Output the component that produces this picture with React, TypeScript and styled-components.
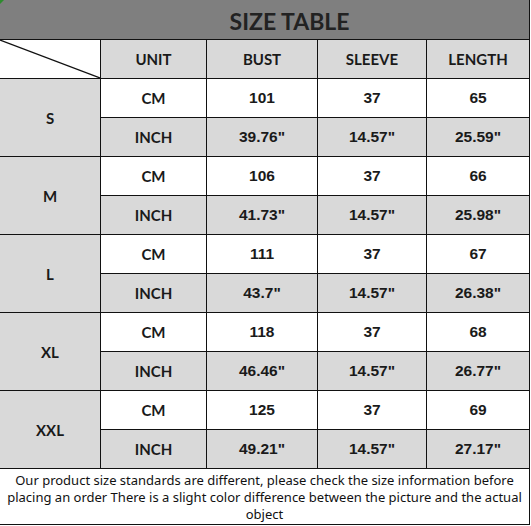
import React from "react";
import styled, { createGlobalStyle, css } from "styled-components";

const GlobalStyle = createGlobalStyle`
  body {
    margin: 0;
    background: #ffffff;
  }
`;

const LINE = "#111111";
const GREY = "#d9d9d9";

const Sheet = styled.div`
  position: relative;
  width: 530px;
  border-right: 1px solid ${LINE};
  border-bottom: 1px solid ${LINE};
  box-sizing: border-box;
  font-family: Lato, "Liberation Sans", sans-serif;
  color: #1a1a1a;
`;

const Corner = styled.div`
  position: absolute;
  left: 0;
  top: 0;
  width: 0;
  height: 0;
  border-top: 4px solid #2e8b2e;
  border-right: 4px solid transparent;
`;

const Title = styled.div`
  height: 40px;
  box-sizing: border-box;
  background: #7f7f7f;
  border-bottom: 1px solid ${LINE};
  display: flex;
  align-items: center;
  justify-content: center;
  font-size: 23px;
  font-weight: 700;
  color: #222222;
  padding-left: 50px;
  padding-top: 2px;
`;

const Grid = styled.div`
  display: grid;
  grid-template-columns: 101px 106px 111px 109px 102px;
  grid-auto-rows: 39px;
`;

interface CellProps {
  readonly $shade?: boolean;
  readonly $num?: boolean;
  readonly $span?: boolean;
  readonly $last?: boolean;
}

const Cell = styled.div<CellProps>`
  display: flex;
  align-items: center;
  justify-content: center;
  box-sizing: border-box;
  border-right: ${(p) => (p.$last ? "none" : `1px solid ${LINE}`)};
  border-bottom: 1px solid ${LINE};
  background: ${(p) => (p.$shade ? GREY : "#ffffff")};
  font-weight: 700;
  font-size: 15px;
  ${(p) =>
    p.$num &&
    css`
      font-family: "Liberation Sans", Arial, sans-serif;
      font-size: 15.5px;
    `}
  ${(p) =>
    p.$span &&
    css`
      grid-row: span 2;
    `}
`;

const DiagCell = styled.div`
  position: relative;
  box-sizing: border-box;
  border-right: 1px solid ${LINE};
  border-bottom: 1px solid ${LINE};
  background: #ffffff;
`;

const DiagLine = styled.svg`
  position: absolute;
  inset: 0;
  width: 100%;
  height: 100%;
`;

const Note = styled.div`
  height: 55px;
  display: flex;
  align-items: center;
  justify-content: center;
  text-align: center;
  padding: 2px 6px 0;
  box-sizing: border-box;
  font-family: "Noto Sans", "Liberation Sans", sans-serif;
  font-size: 13px;
  line-height: 17px;
  color: #111111;
`;

const sizes = [
  { size: "S", cm: ["101", "37", "65"], inch: ['39.76"', '14.57"', '25.59"'] },
  { size: "M", cm: ["106", "37", "66"], inch: ['41.73"', '14.57"', '25.98"'] },
  { size: "L", cm: ["111", "37", "67"], inch: ['43.7"', '14.57"', '26.38"'] },
  { size: "XL", cm: ["118", "37", "68"], inch: ['46.46"', '14.57"', '26.77"'] },
  { size: "XXL", cm: ["125", "37", "69"], inch: ['49.21"', '14.57"', '27.17"'] },
];

const headers = ["UNIT", "BUST", "SLEEVE", "LENGTH"];

export default function App() {
  return (
    <>
      <GlobalStyle />
      <Sheet>
        <Corner />
        <Title>SIZE TABLE</Title>
        <Grid>
          <DiagCell>
            <DiagLine viewBox="0 0 100 38" preserveAspectRatio="none">
              <line x1="0" y1="0" x2="100" y2="38" stroke={LINE} strokeWidth="1.2" />
            </DiagLine>
          </DiagCell>
          {headers.map((h, i) => (
            <Cell key={h} $shade $last={i === 3}>
              {h}
            </Cell>
          ))}
          {sizes.map((row) => (
            <React.Fragment key={row.size}>
              <Cell $shade $span>
                {row.size}
              </Cell>
              <Cell>CM</Cell>
              {row.cm.map((v, i) => (
                <Cell key={"c" + i} $num $last={i === 2}>
                  {v}
                </Cell>
              ))}
              <Cell $shade>INCH</Cell>
              {row.inch.map((v, i) => (
                <Cell key={"i" + i} $shade $num $last={i === 2}>
                  {v}
                </Cell>
              ))}
            </React.Fragment>
          ))}
        </Grid>
        <Note>
          Our product size standards are different, please check the size information before placing
          an order There is a slight color difference between the picture and the actual object
        </Note>
      </Sheet>
    </>
  );
}
